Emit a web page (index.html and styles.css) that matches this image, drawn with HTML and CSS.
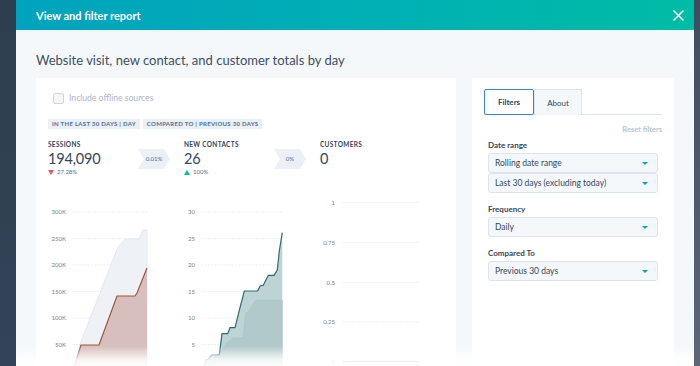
FILE: index.html
```html
<!DOCTYPE html>
<html>
<head>
<meta charset="utf-8">
<link rel="stylesheet" href="styles.css">
</head>
<body>
<div class="page">
  <div class="strip-left"></div>
  <div class="modal">
    <div class="header">
      <div class="header-title">View and filter report</div>
      <svg class="close" width="11" height="11" viewBox="0 0 11 11"><path d="M1 1L10 10M10 1L1 10" stroke="#fff" stroke-width="1.6" stroke-linecap="round"/></svg>
    </div>
    <div class="body">
      <div class="report-title">Website visit, new contact, and customer totals by day</div>
      <div class="content">
        <div class="card card-main">
          <div class="offline"><span class="checkbox"></span><span class="offline-text">Include offline sources</span></div>
          <div class="tags"><span class="tag">IN THE LAST 30 DAYS | DAY</span><span class="tag">COMPARED TO | PREVIOUS 30 DAYS</span></div>
          <div class="metrics">
            <div class="metric">
              <div class="m-label">SESSIONS</div>
              <div class="m-value">194,090</div>
              <div class="m-change"><span class="tri-down"></span>27.28%</div>
              <div class="chev"><svg width="32" height="20" viewBox="0 0 32 20"><polygon points="0,0 26,0 32,10 26,20 0,20 6,10" fill="#eaf0f6"/></svg><span>0.01%</span></div>
            </div>
            <div class="metric">
              <div class="m-label">NEW CONTACTS</div>
              <div class="m-value">26</div>
              <div class="m-change"><span class="tri-up"></span>100%</div>
              <div class="chev"><svg width="32" height="20" viewBox="0 0 32 20"><polygon points="0,0 26,0 32,10 26,20 0,20 6,10" fill="#eaf0f6"/></svg><span>0%</span></div>
            </div>
            <div class="metric">
              <div class="m-label">CUSTOMERS</div>
              <div class="m-value">0</div>
            </div>
          </div>
          <svg class="charts" width="420" height="180" viewBox="36 196 420 180">
            <g class="grid" stroke="#e6ecf2" stroke-width="0.8" stroke-dasharray="2 1">
              <line x1="73" y1="211" x2="147" y2="211"/><line x1="73" y1="237.5" x2="147" y2="237.5"/><line x1="73" y1="264" x2="147" y2="264"/><line x1="73" y1="290.5" x2="147" y2="290.5"/><line x1="73" y1="317" x2="147" y2="317"/><line x1="73" y1="343.5" x2="147" y2="343.5"/>
              <line x1="202" y1="211" x2="283" y2="211"/><line x1="202" y1="237.5" x2="283" y2="237.5"/><line x1="202" y1="264" x2="283" y2="264"/><line x1="202" y1="290.5" x2="283" y2="290.5"/><line x1="202" y1="317" x2="283" y2="317"/><line x1="202" y1="343.5" x2="283" y2="343.5"/>
              <line x1="343" y1="201.5" x2="419" y2="201.5"/><line x1="343" y1="241.5" x2="419" y2="241.5"/><line x1="343" y1="281.5" x2="419" y2="281.5"/><line x1="343" y1="321" x2="419" y2="321"/>
            </g>
            <g class="axis" font-size="6" fill="#6f8398" text-anchor="end">
              <text x="66" y="213">300K</text><text x="66" y="239.5">250K</text><text x="66" y="266">200K</text><text x="66" y="292.5">150K</text><text x="66" y="319">100K</text><text x="66" y="345.5">50K</text>
              <text x="195" y="213">30</text><text x="195" y="239.5">25</text><text x="195" y="266">20</text><text x="195" y="292.5">15</text><text x="195" y="319">10</text><text x="195" y="345.5">5</text>
              <text x="335" y="203.5">1</text><text x="335" y="243.5">0.75</text><text x="335" y="283.5">0.5</text><text x="335" y="323">0.25</text><text x="335" y="362.5">0</text>
            </g>
            <polygon points="74,370 80,343 118,246 125,238 139,238 143,229 147,229 147,370" fill="#eef2f6" stroke="#dde5ee" stroke-width="0.8"/>
            <polygon points="74,366 81,344 99,344 117,295 135,295 137,292 147,267 147,370 74,370" fill="#d6bfbc"/>
            <polyline points="72,370 74,366 81,344 99,344 117,295 135,295 137,292 147,267" fill="none" stroke="#a4533f" stroke-width="1.2"/>
            <polygon points="204,365 206,359 208.7,358 211.7,354 219.3,354 222,332.7 227.7,332.7 230,326.7 235,326.7 240,306.7 244.3,290 257.7,290 260,285 263.3,284.3 268.3,274.3 274,274.3 277.3,269 279.3,250 282.3,231.7 282.3,370 203,370" fill="#bed3d4"/>
            <polygon points="206,370 208,365 213,358 218,353 223,347 227,342 233,337 243,337 245.7,311.7 248,311.7 255,300 256.7,299.3 282.3,299.3 282.3,370" fill="#b1c9ca" stroke="#a6c1c2" stroke-width="0.6"/>
            <polyline points="202,372 204,365 206,359 208.7,358 211.7,354 219.3,354 222,332.7 227.7,332.7 230,326.7 235,326.7 240,306.7 244.3,290 257.7,290 260,285 263.3,284.3 268.3,274.3 274,274.3 277.3,269 279.3,250 282.3,231.7" fill="none" stroke="#2b6e72" stroke-width="1.2"/>
            <line x1="343" y1="360.5" x2="419" y2="360.5" stroke="#6b6fa6" stroke-width="1"/>
            <line x1="343.5" y1="358.5" x2="343.5" y2="360.5" stroke="#6b6fa6" stroke-width="0.6"/>
            <line x1="395" y1="358.5" x2="395" y2="360.5" stroke="#9a9dc4" stroke-width="0.6"/>
          </svg>
        </div>
        <div class="card card-side">
          <div class="tabs"><span class="tab tab-active">Filters</span><span class="tab">About</span></div>
          <div class="reset">Reset filters</div>
          <div class="f-label">Date range</div>
          <div class="select">Rolling date range<span class="caret"></span></div>
          <div class="select select-2">Last 30 days (excluding today)<span class="caret"></span></div>
          <div class="f-label f-gap">Frequency</div>
          <div class="select">Daily<span class="caret"></span></div>
          <div class="f-label f-gap">Compared To</div>
          <div class="select">Previous 30 days<span class="caret"></span></div>
        </div>
      </div>
      <div class="fade"></div>
    </div>
  </div>
  <div class="strip-right"></div>
</div>
</body>
</html>
```

FILE: styles.css
```css
html, body {
  margin: 0;
  padding: 0;
  width: 700px;
  height: 366px;
  overflow: hidden;
  background: #2d3e50;
  font-family: Lato, "Open Sans", sans-serif;
  color: #33475b;
}
.page {
  display: flex;
  width: 700px;
  height: 366px;
}
.strip-left {
  width: 16px;
  flex: none;
  background: linear-gradient(180deg, #2d3e50, #324457);
}
.strip-right {
  width: 6px;
  flex: none;
  background: linear-gradient(180deg, #3d4c5e, #5a6878);
}
.modal {
  width: 678px;
  flex: none;
  display: flex;
  flex-direction: column;
  height: 366px;
}
.header {
  height: 30px;
  flex: none;
  background: linear-gradient(90deg, #00a3bc 0%, #00afb5 50%, #00bca5 100%);
  display: flex;
  align-items: center;
  justify-content: space-between;
  padding: 0 10px 0 20px;
}
.header-title {
  color: #fff;
  font-weight: 700;
  font-size: 11px;
}
.close {
  display: block;
}
.body {
  flex: 1;
  background: #f5f8fa;
  padding: 0 20px;
  position: relative;
  overflow: hidden;
}
.report-title {
  margin-top: 22px;
  height: 16px;
  line-height: 16px;
  font-size: 13px;
  color: #3d4f63;
}
.content {
  margin-top: 10px;
  display: flex;
  gap: 16px;
}
.card {
  background: #fff;
  height: 320px;
  flex: none;
}
.card-main {
  width: 420px;
}
.card-side {
  width: 202px;
  padding: 11px 12px 0 12px;
  box-sizing: border-box;
}
.offline {
  margin-top: 15px;
  padding-left: 17px;
  display: flex;
  align-items: center;
  height: 10px;
}
.checkbox {
  width: 9px;
  height: 9px;
  border: 1px solid #cbd6e2;
  border-radius: 2px;
  background: #f5f8fa;
}
.offline-text {
  margin-left: 5px;
  font-size: 8.6px;
  color: #a9b8c9;
}
.tags {
  margin-top: 16px;
  padding-left: 12px;
  display: flex;
  gap: 3px;
}
.tag {
  height: 10px;
  line-height: 10px;
  background: #eaf0f6;
  color: #516f90;
  font-size: 6px;
  font-weight: 700;
  letter-spacing: 0.3px;
  padding: 0 4px;
}
.metrics {
  margin-top: 11px;
  padding-left: 12px;
  display: flex;
  height: 46px;
}
.metric {
  width: 136px;
  flex: none;
  position: relative;
}
.m-label {
  font-size: 6.5px;
  font-weight: 700;
  letter-spacing: 0.3px;
  height: 10px;
  line-height: 10px;
  color: #33475b;
}
.m-value {
  font-size: 14.5px;
  font-weight: 400;
  letter-spacing: -0.2px;
  height: 18px;
  line-height: 18px;
  color: #33475b;
}
.m-change {
  font-size: 6px;
  color: #516f90;
  height: 8px;
  line-height: 8px;
  display: flex;
  align-items: center;
  gap: 3px;
}
.tri-down {
  width: 0;
  height: 0;
  border-left: 3px solid transparent;
  border-right: 3px solid transparent;
  border-top: 5px solid #f2545b;
}
.tri-up {
  width: 0;
  height: 0;
  border-left: 3px solid transparent;
  border-right: 3px solid transparent;
  border-bottom: 5px solid #00bda5;
}
.chev {
  position: absolute;
  left: 90px;
  top: 9px;
  width: 32px;
  height: 20px;
}
.chev svg {
  display: block;
}
.chev span {
  position: absolute;
  left: 0;
  top: 0;
  width: 32px;
  text-align: center;
  line-height: 20px;
  font-size: 6px;
  color: #516f90;
}
.charts {
  display: block;
  margin-top: 11px;
  font-family: Lato, sans-serif;
}
.tabs {
  display: flex;
  border-bottom: 1px solid #dfe3eb;
  width: 178px;
  height: 25px;
}
.tab {
  width: 48px;
  height: 26px;
  box-sizing: border-box;
  border: 1px solid #dfe3eb;
  border-bottom: none;
  background: #f5f8fa;
  font-size: 8px;
  display: flex;
  align-items: center;
  justify-content: center;
  color: #33475b;
}
.tab-active {
  width: 50px;
  background: #fff;
  border: 1px solid #3b82e0;
  border-radius: 2px;
  font-weight: 700;
}
.reset {
  text-align: right;
  font-size: 7.5px;
  font-weight: 700;
  color: #b6c6d6;
  margin-top: 10px;
  height: 10px;
  line-height: 10px;
}
.f-label {
  padding-left: 4px;
  font-size: 8px;
  font-weight: 700;
  color: #33475b;
  margin-top: 5px;
  height: 10px;
  line-height: 10px;
}
.f-gap {
  margin-top: 11px;
}
.select {
  margin: 3px 4px 0 4px;
  height: 20px;
  box-sizing: border-box;
  background: #f5f8fa;
  border: 1px solid #dfe3eb;
  border-radius: 3px;
  font-size: 8.5px;
  color: #33475b;
  padding: 0 6px;
  display: flex;
  align-items: center;
  justify-content: space-between;
}
.select-2 {
  margin-top: 0;
}
.caret {
  width: 0;
  height: 0;
  border-left: 3px solid transparent;
  border-right: 3px solid transparent;
  border-top: 3px solid #00a4bd;
  margin-right: 3px;
}
.fade {
  position: absolute;
  left: 0;
  right: 0;
  bottom: 0;
  height: 20px;
  background: linear-gradient(180deg, rgba(255,255,255,0) 0%, rgba(255,255,255,0.85) 70%, rgba(255,255,255,0.95) 100%);
}
```
